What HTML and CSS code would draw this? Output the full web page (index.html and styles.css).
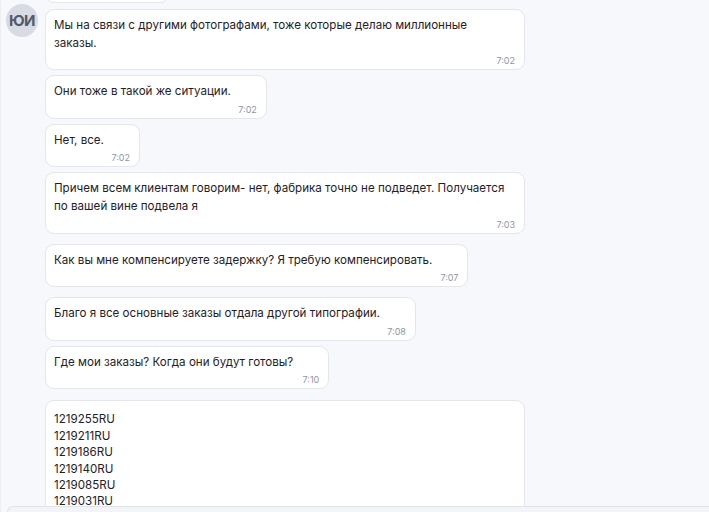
FILE: index.html
```html
<!DOCTYPE html>
<html lang="ru">
<head>
<meta charset="utf-8">
<title>Чат</title>
<link rel="stylesheet" href="styles.css">
</head>
<body>
<div class="chat">
  <div class="feed">
    <div class="msg first">
      <div class="slot"></div>
      <div class="bubble stub"></div>
    </div>
    <div class="msg">
      <div class="slot"><div class="avatar">ЮИ</div></div>
      <div class="bubble"><div class="text">Мы на связи с другими фотографами, тоже которые делаю миллионные <span class="tail">заказы.<span class="pad"></span></span></div><div class="time">7:02</div></div>
    </div>
    <div class="msg">
      <div class="slot"></div>
      <div class="bubble"><div class="text">Они тоже в такой же <span class="tail">ситуации.<span class="pad"></span></span></div><div class="time">7:02</div></div>
    </div>
    <div class="msg">
      <div class="slot"></div>
      <div class="bubble"><div class="text">Нет, <span class="tail">все.<span class="pad"></span></span></div><div class="time">7:02</div></div>
    </div>
    <div class="msg">
      <div class="slot"></div>
      <div class="bubble"><div class="text">Причем всем клиентам говорим- нет, фабрика точно не подведет. Получается по вашей вине подвела <span class="tail">я<span class="pad"></span></span></div><div class="time">7:03</div></div>
    </div>
    <div class="msg later">
      <div class="slot"></div>
      <div class="bubble"><div class="text">Как вы мне компенсируете задержку? Я требую <span class="tail">компенсировать.<span class="pad"></span></span></div><div class="time">7:07</div></div>
    </div>
    <div class="msg later">
      <div class="slot"></div>
      <div class="bubble"><div class="text">Благо я все основные заказы отдала другой <span class="tail">типографии.<span class="pad"></span></span></div><div class="time">7:08</div></div>
    </div>
    <div class="msg">
      <div class="slot"></div>
      <div class="bubble"><div class="text">Где мои заказы? Когда они будут <span class="tail">готовы?<span class="pad"></span></span></div><div class="time">7:10</div></div>
    </div>
    <div class="msg later codes-row">
      <div class="slot"></div>
      <div class="bubble codes"><div class="text">1219255RU<br>1219211RU<br>1219186RU<br>1219140RU<br>1219085RU<br>1219031RU</div></div>
    </div>
  </div>
  <div class="composer"></div>
</div>
</body>
</html>
```
FILE: styles.css
```css
* { box-sizing: border-box; }
html, body { margin: 0; padding: 0; }
body {
  background: #f7f8fc;
  font-family: Inter, "Noto Sans", sans-serif;
  color: #1f2128;
  width: 709px;
  height: 512px;
  overflow: hidden;
}
.chat {
  display: flex;
  flex-direction: column;
  height: 512px;
  border-left: 1px solid #eceef3;
}
.feed {
  height: 506px;
  overflow: hidden;
  display: flex;
  flex-direction: column;
  align-items: stretch;
}
.msg {
  display: flex;
  align-items: flex-start;
  margin-top: 5px;
  flex: none;
}
.msg.first { margin-top: -41px; }
.msg.first + .msg { margin-top: 6px; }
.msg.later { margin-top: 10px; }
.msg.codes-row { margin-top: 11px; }
.slot {
  width: 32px;
  margin-left: 5px;
  margin-right: 7px;
  flex: none;
}
.avatar {
  width: 32px;
  height: 33px;
  border-radius: 50%;
  background: #d8dbe3;
  color: #525a6b;
  font-weight: 700;
  font-size: 15px;
  letter-spacing: -0.5px;
  display: flex;
  align-items: center;
  justify-content: center;
  margin-top: -5px;
}
.bubble {
  max-width: 480px;
  background: #ffffff;
  border: 1px solid #e3e6ed;
  border-radius: 9px;
  padding: 7px 9px 3px 8px;
}
.bubble.stub {
  width: 124px;
  height: 44px;
}
.text {
  font-size: 11.6px;
  line-height: 17.6px;
}
.tail { white-space: nowrap; }
.pad {
  display: inline-block;
  width: 26px;
}
.time {
  text-align: right;
  font-size: 9px;
  line-height: 11px;
  margin-top: 3px;
  color: #8d95a8;
}
.codes {
  width: 480px;
  min-height: 150px;
  padding-top: 10px;
}
.codes .text { line-height: 16.4px; }
.composer {
  flex: 1;
  margin-left: 6px;
  background: #f2f4f8;
  border: 1px solid #dfe3ea;
  border-bottom: none;
  border-right: none;
  border-radius: 6px 0 0 0;
}
```
